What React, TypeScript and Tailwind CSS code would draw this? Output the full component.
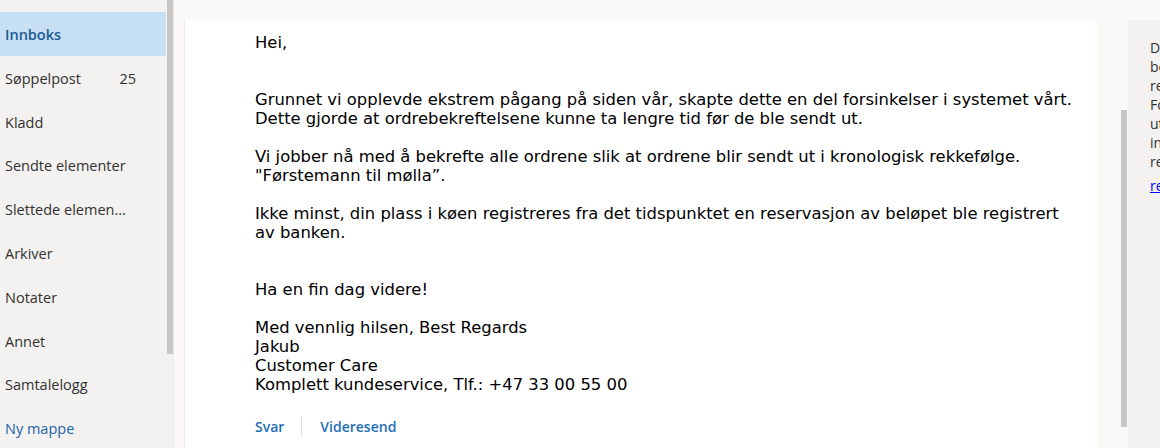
import React from 'react'

const folders = [
  { name: 'Innboks', active: true },
  { name: 'Søppelpost', count: '25' },
  { name: 'Kladd' },
  { name: 'Sendte elementer' },
  { name: 'Slettede elementer' },
  { name: 'Arkiver' },
  { name: 'Notater' },
  { name: 'Annet' },
  { name: 'Samtalelogg' },
]

const sideLines = ['Denne', 'beskjeden', 'reklame', 'For', 'ut', 'informasjon', 'rett']

export default function App() {
  return (
    <div className="flex h-[448px] w-[1160px] overflow-hidden bg-[#faf9f8] font-['Open_Sans',sans-serif]">
      {/* mappeliste */}
      <div className="relative w-[174px] shrink-0 border-r border-[#edebe9] bg-[#f3f2f1]">
        <div className="w-[166px] pt-3">
          {folders.map((f) => (
            <div
              key={f.name}
              className={`flex h-[43.8px] items-center pl-[5px] pr-[30px] pt-[2px] text-[14.5px] ${
                f.active ? 'bg-[#c7e0f4] font-semibold text-[#1b5a93]' : 'text-[#323130]'
              }`}
            >
              <span className="min-w-0 max-w-[122px] truncate">{f.name}</span>
              {f.count && <span className="ml-auto">{f.count}</span>}
            </div>
          ))}
          <div className="flex h-[43.8px] items-center pl-[5px] pt-[2px] text-[14.5px] text-[#1b64a8]">Ny mappe</div>
        </div>
        {/* scrollbar */}
        <div className="absolute left-[167px] top-0 h-[354px] w-[6px] bg-[#c8c6c4]" />
      </div>

      {/* lesepanel */}
      <div className="relative flex flex-1 pl-[10px] pt-5">
        <div className="w-[913px] shrink-0 border-l border-[#edebe9] bg-white pl-[70px] pt-[13px] font-['DejaVu_Sans',Verdana,sans-serif] text-[16.4px] leading-[19px] text-[#000000]">
          <div>
            Hei,
            <br />
            <br />
            <br />
            Grunnet vi opplevde ekstrem pågang på siden vår, skapte dette en del forsinkelser i systemet vårt.
            <br />
            Dette gjorde at ordrebekreftelsene kunne ta lengre tid før de ble sendt ut.
            <br />
            <br />
            Vi jobber nå med å bekrefte alle ordrene slik at ordrene blir sendt ut i kronologisk rekkefølge.
            <br />
            "Førstemann til mølla”.
            <br />
            <br />
            Ikke minst, din plass i køen registreres fra det tidspunktet en reservasjon av beløpet ble registrert
            <br />
            av banken.
            <br />
            <br />
            <br />
            Ha en fin dag videre!
            <br />
            <br />
            Med vennlig hilsen, Best Regards
            <br />
            Jakub
            <br />
            Customer Care
            <br />
            Komplett kundeservice, Tlf.: +47 33 00 55 00
          </div>
          <div className="mt-[22px] flex items-center font-['Open_Sans',sans-serif] text-[14px] font-semibold text-[#1e6fb5]">
            <span>Svar</span>
            <span className="ml-[17px] mr-[18px] h-[21px] w-px bg-[#e1dfdd]" />
            <span>Videresend</span>
          </div>
        </div>
        <div className="relative w-[31px] shrink-0">
          <div className="absolute left-[24px] top-[90px] h-[317px] w-[6px] bg-[#c8c6c4]" />
        </div>
        <div className="flex-1 overflow-hidden bg-[#f3f2f1] pl-[22px] pt-[18px] text-[14px] leading-[19px] text-[#323130]">
          {sideLines.map((l) => (
            <div key={l} className="whitespace-nowrap">{l}</div>
          ))}
          <div className="mt-[5px] whitespace-nowrap text-[#0000ee] underline">registrer</div>
        </div>
      </div>
    </div>
  )
}
